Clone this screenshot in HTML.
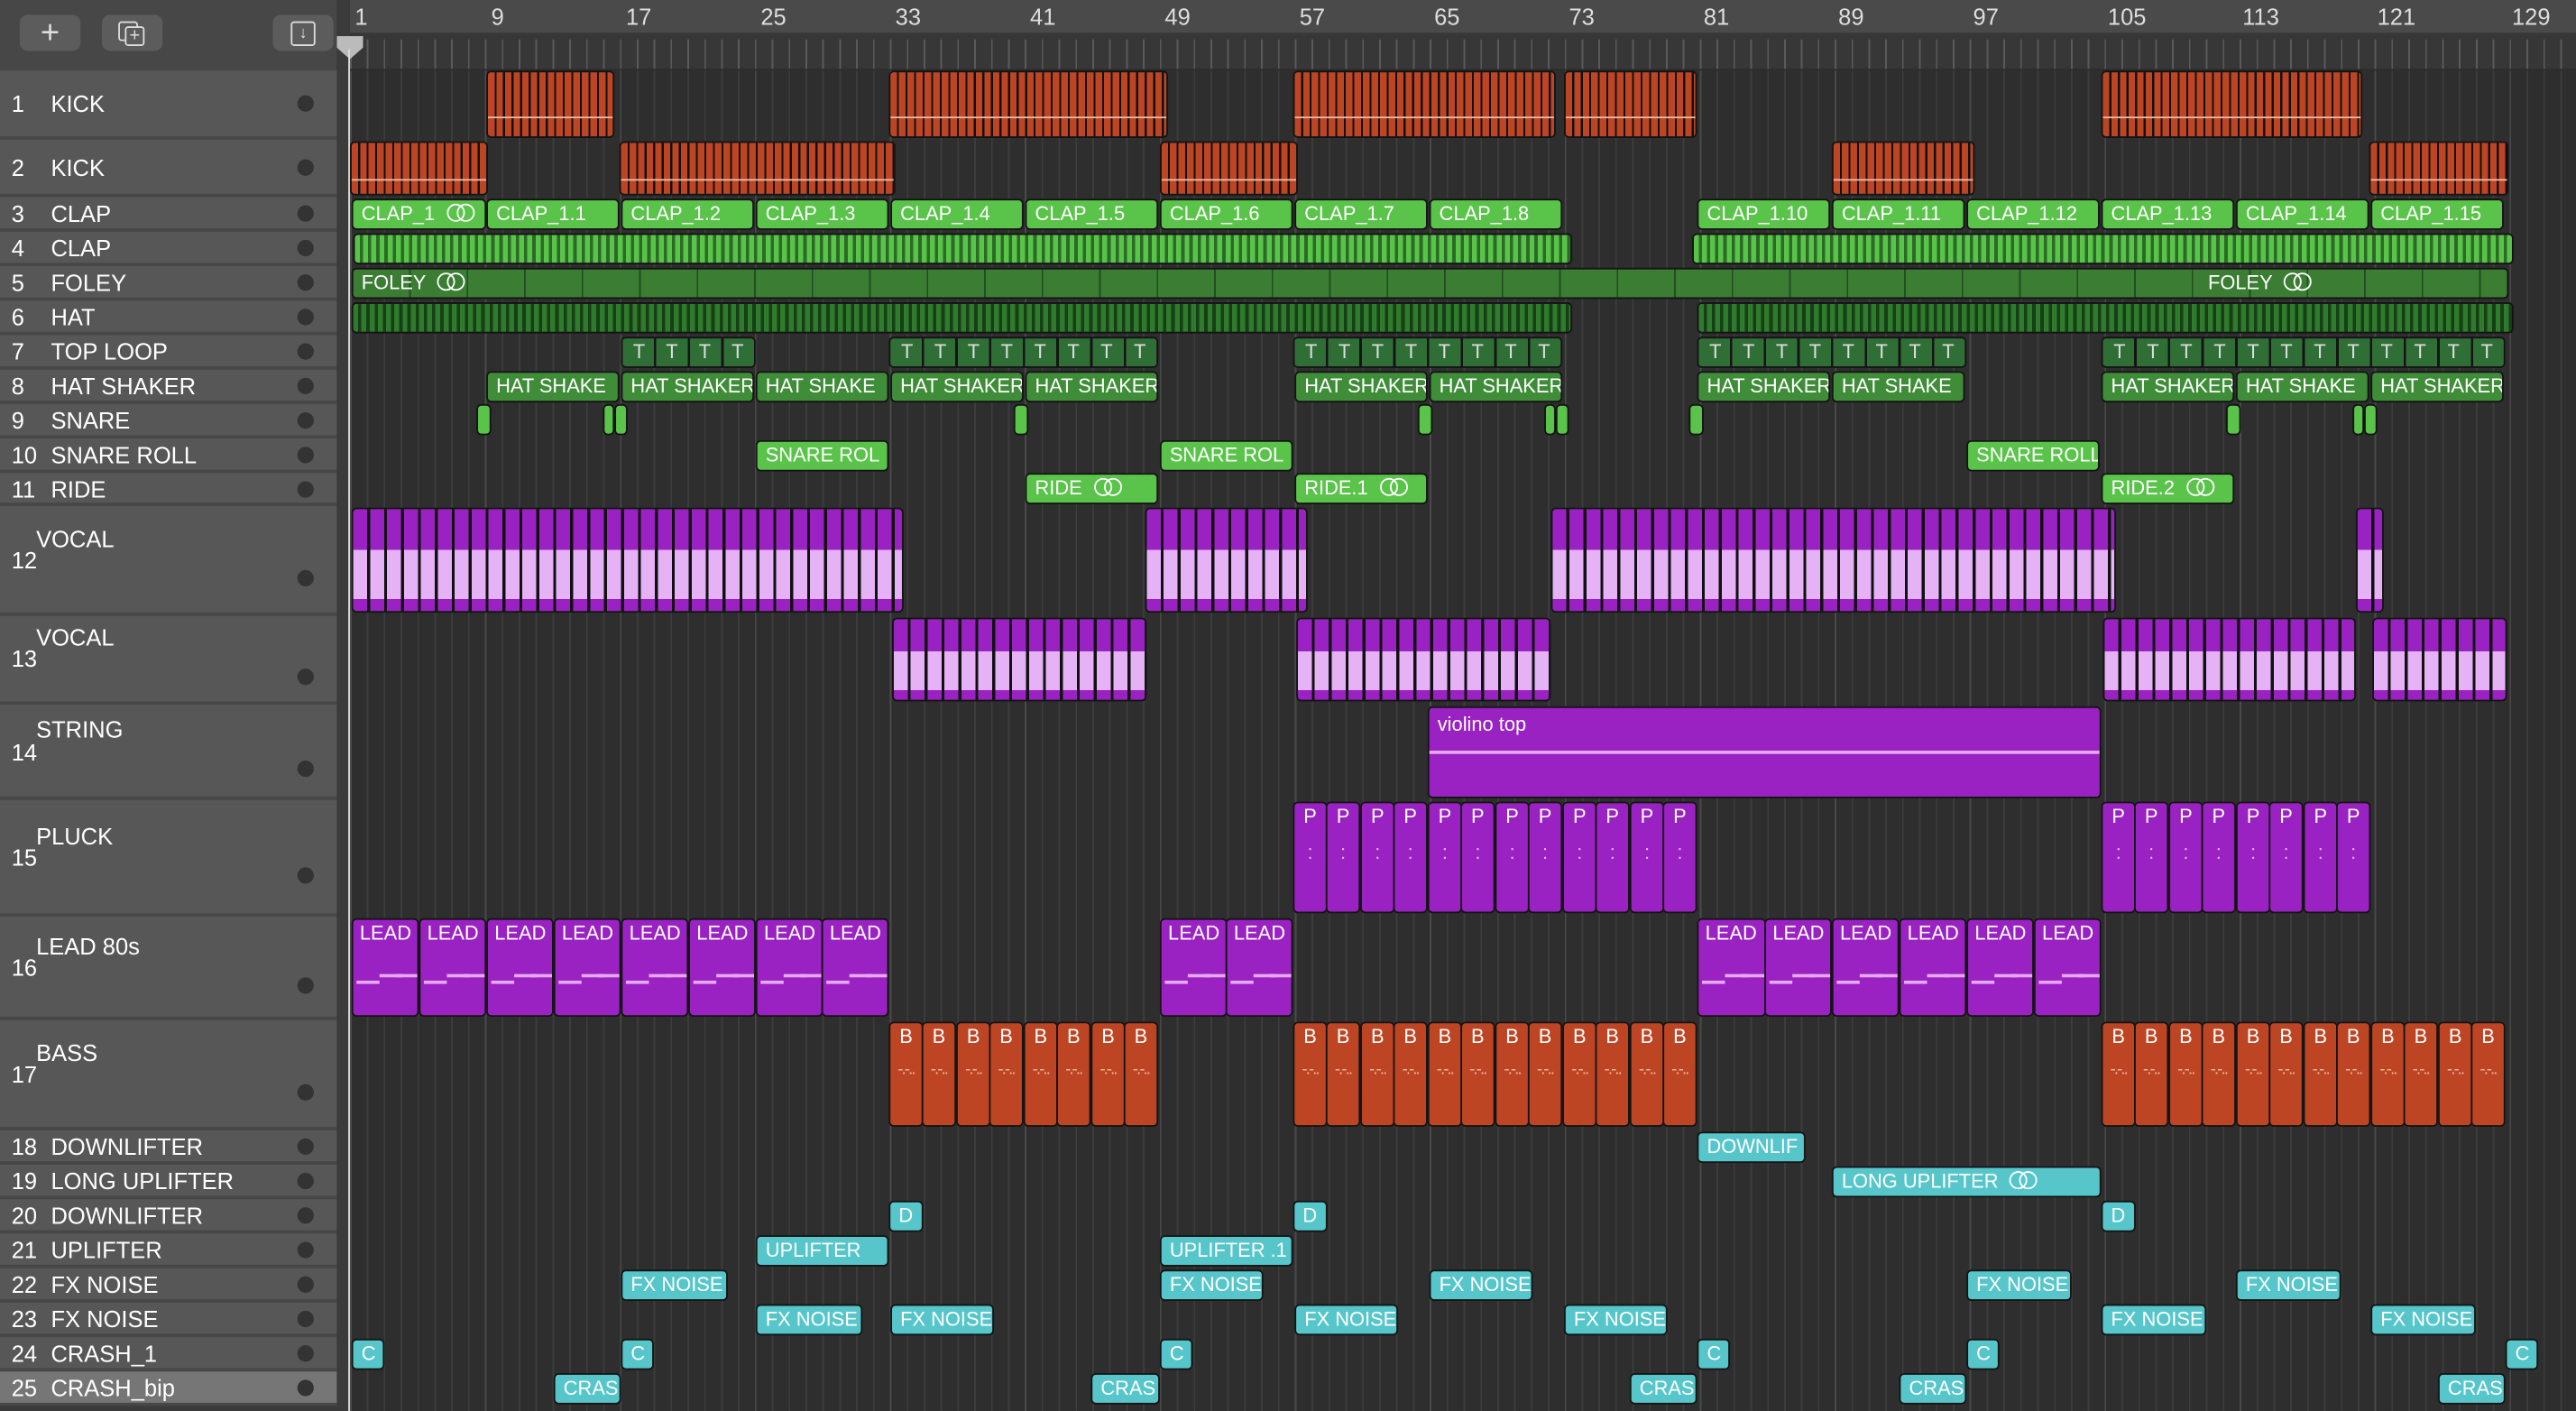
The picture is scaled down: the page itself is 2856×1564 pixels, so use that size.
<!DOCTYPE html>
<html><head><meta charset="utf-8">
<style>
html,body{margin:0;padding:0;background:#2d2d2d;overflow:hidden;width:2856px;height:1564px}
#w{position:absolute;left:0;top:0;width:1568px;height:859px;transform:scale(1.82143,1.8207);transform-origin:0 0;font-family:"Liberation Sans",sans-serif;background:#2e2e2e;overflow:hidden}
.a{position:absolute}
.tl{position:absolute;left:0;width:205px;background:#575757;border-bottom:2px solid #474747;box-sizing:border-box;color:#fff;font-size:14px}
.tl .n{position:absolute;left:7px}
.tl .t{position:absolute;left:31px}
.tl .d{position:absolute;left:181px;width:10px;height:10px;border-radius:50%;background:#333}
.r{position:absolute;border-radius:3px;border:1px solid #141414;box-sizing:border-box;color:#fff;font-size:12px;padding-left:5px;overflow:hidden;white-space:nowrap;line-height:17px}
.o{background:#bd4524}
.g{background:#5ac34a}
.dg{background:#3f8d38}
.p{background:#9a22c2}
.c{background:#56c6cb}
.ring{display:inline-block;width:9px;height:9px;border:1.3px solid #fff;border-radius:50%;vertical-align:-1px;margin-left:7px}
.ring+.ring{margin-left:-5px}
.kk{background:repeating-linear-gradient(90deg,#bd4524 0 4px,#111 4px 5.2px)}
.kk::after{content:"";position:absolute;left:0;right:0;top:70%;height:1px;background:#f1b9a5}
.st{background:repeating-linear-gradient(90deg,#5ac34a 0 3px,#2b6b26 3px 5px)}
.hs{background:repeating-linear-gradient(90deg,#2f7a2c 0 3px,#163f16 3px 5px)}
.vc{background:linear-gradient(#9a22c2 0 40%,transparent 40% 88%,#9a22c2 88%),repeating-linear-gradient(90deg,#e4b2f5 0 8.5px,#111 8.5px 10.3px)}
.vc::before{content:"";position:absolute;inset:0;background:repeating-linear-gradient(90deg,transparent 0 8.5px,#111 8.5px 10.3px)}
.pp{text-align:center;padding:0;background:#9a22c2}
.pp::after{content:":";position:absolute;left:0;right:0;top:22px;color:#e6a9f5;font-size:12px}
.ld::after{content:"";position:absolute;left:2px;width:14px;top:37px;height:2px;background:#e6a9f5;box-shadow:14px -4px 0 #e6a9f5,24px -4px 0 #e6a9f5}
.bb{text-align:center;padding:0;background:#bd4524}
.bb::after{content:"-.-..";position:absolute;left:0;right:0;top:20px;color:#f4b9a3;font-size:10px;letter-spacing:-1px}
</style></head><body><div id="w">
<div class="a" style="left:213px;top:0;width:1355px;height:859px;background:repeating-linear-gradient(90deg,#3c3c3c 0 1px,transparent 1px 10.27px)"></div>
<div class="a" style="left:213px;top:0;width:1355px;height:859px;background:repeating-linear-gradient(90deg,#4a4a4a 0 1px,transparent 1px 82.16px)"></div>
<div class="a" style="left:0;top:0;width:205px;height:43px;background:#474747;border-bottom:1px solid #3a3a3a"></div>
<div class="a" style="left:12px;top:9px;width:37px;height:22px;background:#5c5c5c;border-radius:5px;color:#ddd;text-align:center;font-size:20px;line-height:22px">+</div>
<div class="a" style="left:62px;top:9px;width:37px;height:22px;background:#5c5c5c;border-radius:5px"><div class="a" style="left:10px;top:4px;width:10px;height:10px;border:1.3px solid #ddd;border-radius:2px"></div><div class="a" style="left:14px;top:7px;width:10px;height:10px;border:1.3px solid #ddd;border-radius:2px;background:#5c5c5c;color:#ddd;font-size:11px;line-height:10px;text-align:center">+</div></div>
<div class="a" style="left:166px;top:9px;width:37px;height:22px;background:#5c5c5c;border-radius:5px"><div class="a" style="left:11px;top:4px;width:13px;height:13px;border:1.3px solid #ddd;border-radius:2px;color:#ddd;font-size:10px;line-height:14px;text-align:center">↓</div></div>
<div class="a" style="left:205px;top:0;width:8px;height:859px;background:#3b3b3b"></div>
<div class="a" style="left:213px;top:0;width:1355px;height:20px;background:#4a4a4a;border-bottom:1px solid #3c3c3c;color:#ddd;font-size:14px;line-height:20px">
<span class="a" style="left:3px">1</span><span class="a" style="left:86px">9</span><span class="a" style="left:168px">17</span><span class="a" style="left:250px">25</span><span class="a" style="left:332px">33</span><span class="a" style="left:414px">41</span><span class="a" style="left:496px">49</span><span class="a" style="left:578px">57</span><span class="a" style="left:660px">65</span><span class="a" style="left:742px">73</span><span class="a" style="left:824px">81</span><span class="a" style="left:906px">89</span><span class="a" style="left:988px">97</span><span class="a" style="left:1070px">105</span><span class="a" style="left:1152px">113</span><span class="a" style="left:1234px">121</span><span class="a" style="left:1316px">129</span></div>
<div class="a" style="left:213px;top:20px;width:1355px;height:22px;background:#373737;border-bottom:1px solid #2a2a2a"></div>
<div class="a" style="left:213px;top:24px;width:1355px;height:18px;background:repeating-linear-gradient(90deg,#5a5a5a 0 1px,transparent 1px 10.27px)"></div>
<div class="a" style="left:205px;top:22px;width:16px;height:14px;background:#bbb;clip-path:polygon(0 0,100% 0,100% 50%,50% 100%,0 50%)"></div>
<div class="a" style="left:212px;top:30px;width:1px;height:829px;background:#ddd"></div>
<div class="tl" style="top:43px;height:42px"><span class="n" style="top:12px">1</span><span class="t" style="top:12px">KICK</span><span class="d" style="top:15px"></span></div>
<div class="tl" style="top:85px;height:35px"><span class="n" style="top:9px">2</span><span class="t" style="top:9px">KICK</span><span class="d" style="top:12px"></span></div>
<div class="tl" style="top:120px;height:21px"><span class="n" style="top:2px">3</span><span class="t" style="top:2px">CLAP</span><span class="d" style="top:5px"></span></div>
<div class="tl" style="top:141px;height:21px"><span class="n" style="top:2px">4</span><span class="t" style="top:2px">CLAP</span><span class="d" style="top:5px"></span></div>
<div class="tl" style="top:162px;height:21px"><span class="n" style="top:2px">5</span><span class="t" style="top:2px">FOLEY</span><span class="d" style="top:5px"></span></div>
<div class="tl" style="top:183px;height:21px"><span class="n" style="top:2px">6</span><span class="t" style="top:2px">HAT</span><span class="d" style="top:5px"></span></div>
<div class="tl" style="top:204px;height:21px"><span class="n" style="top:2px">7</span><span class="t" style="top:2px">TOP LOOP</span><span class="d" style="top:5px"></span></div>
<div class="tl" style="top:225px;height:21px"><span class="n" style="top:2px">8</span><span class="t" style="top:2px">HAT SHAKER</span><span class="d" style="top:5px"></span></div>
<div class="tl" style="top:246px;height:21px"><span class="n" style="top:2px">9</span><span class="t" style="top:2px">SNARE</span><span class="d" style="top:5px"></span></div>
<div class="tl" style="top:267px;height:21px"><span class="n" style="top:2px">10</span><span class="t" style="top:2px">SNARE ROLL</span><span class="d" style="top:5px"></span></div>
<div class="tl" style="top:288px;height:20px"><span class="n" style="top:2px">11</span><span class="t" style="top:2px">RIDE</span><span class="d" style="top:5px"></span></div>
<div class="tl" style="top:308px;height:67px"><span class="n" style="top:25px">12</span><span class="t" style="left:22px;top:12px">VOCAL</span><span class="d" style="top:39px"></span></div>
<div class="tl" style="top:375px;height:54px"><span class="n" style="top:18px">13</span><span class="t" style="left:22px;top:5px">VOCAL</span><span class="d" style="top:32px"></span></div>
<div class="tl" style="top:429px;height:58px"><span class="n" style="top:21px">14</span><span class="t" style="left:22px;top:7px">STRING</span><span class="d" style="top:34px"></span></div>
<div class="tl" style="top:487px;height:71px"><span class="n" style="top:27px">15</span><span class="t" style="left:22px;top:14px">PLUCK</span><span class="d" style="top:41px"></span></div>
<div class="tl" style="top:558px;height:63px"><span class="n" style="top:23px">16</span><span class="t" style="left:22px;top:10px">LEAD 80s</span><span class="d" style="top:37px"></span></div>
<div class="tl" style="top:621px;height:67px"><span class="n" style="top:25px">17</span><span class="t" style="left:22px;top:12px">BASS</span><span class="d" style="top:39px"></span></div>
<div class="tl" style="top:688px;height:21px"><span class="n" style="top:2px">18</span><span class="t" style="top:2px">DOWNLIFTER</span><span class="d" style="top:5px"></span></div>
<div class="tl" style="top:709px;height:21px"><span class="n" style="top:2px">19</span><span class="t" style="top:2px">LONG UPLIFTER</span><span class="d" style="top:5px"></span></div>
<div class="tl" style="top:730px;height:21px"><span class="n" style="top:2px">20</span><span class="t" style="top:2px">DOWNLIFTER</span><span class="d" style="top:5px"></span></div>
<div class="tl" style="top:751px;height:21px"><span class="n" style="top:2px">21</span><span class="t" style="top:2px">UPLIFTER</span><span class="d" style="top:5px"></span></div>
<div class="tl" style="top:772px;height:21px"><span class="n" style="top:2px">22</span><span class="t" style="top:2px">FX NOISE</span><span class="d" style="top:5px"></span></div>
<div class="tl" style="top:793px;height:21px"><span class="n" style="top:2px">23</span><span class="t" style="top:2px">FX NOISE</span><span class="d" style="top:5px"></span></div>
<div class="tl" style="top:814px;height:21px"><span class="n" style="top:2px">24</span><span class="t" style="top:2px">CRASH_1</span><span class="d" style="top:5px"></span></div>
<div class="tl" style="top:835px;height:21px;background:#767676"><span class="n" style="top:2px">25</span><span class="t" style="top:2px">CRASH_bip</span><span class="d" style="top:5px"></span></div>
<div class="a" style="left:0;top:856px;width:205px;height:3px;background:#3b3b3b"></div>

<div class="r kk" style="left:296px;top:43px;width:78px;height:41px"></div>
<div class="r kk" style="left:541px;top:43px;width:170px;height:41px"></div>
<div class="r kk" style="left:787px;top:43px;width:160px;height:41px"></div>
<div class="r kk" style="left:952px;top:43px;width:81px;height:41px"></div>
<div class="r kk" style="left:1279px;top:43px;width:159px;height:41px"></div>
<div class="r kk" style="left:213px;top:86px;width:84px;height:33px"></div>
<div class="r kk" style="left:377px;top:86px;width:168px;height:33px"></div>
<div class="r kk" style="left:706px;top:86px;width:84px;height:33px"></div>
<div class="r kk" style="left:1115px;top:86px;width:87px;height:33px"></div>
<div class="r kk" style="left:1442px;top:86px;width:85px;height:33px"></div>
<div class="r g" style="left:214px;top:121px;width:82px;height:19px">CLAP_1<span class="ring"></span><span class="ring"></span></div>
<div class="r g" style="left:296px;top:121px;width:81px;height:19px">CLAP_1.1</div>
<div class="r g" style="left:378px;top:121px;width:81px;height:19px">CLAP_1.2</div>
<div class="r g" style="left:460px;top:121px;width:81px;height:19px">CLAP_1.3</div>
<div class="r g" style="left:542px;top:121px;width:81px;height:19px">CLAP_1.4</div>
<div class="r g" style="left:624px;top:121px;width:81px;height:19px">CLAP_1.5</div>
<div class="r g" style="left:706px;top:121px;width:81px;height:19px">CLAP_1.6</div>
<div class="r g" style="left:788px;top:121px;width:81px;height:19px">CLAP_1.7</div>
<div class="r g" style="left:870px;top:121px;width:81px;height:19px">CLAP_1.8</div>
<div class="r g" style="left:1033px;top:121px;width:81px;height:19px">CLAP_1.10</div>
<div class="r g" style="left:1115px;top:121px;width:81px;height:19px">CLAP_1.11</div>
<div class="r g" style="left:1197px;top:121px;width:81px;height:19px">CLAP_1.12</div>
<div class="r g" style="left:1279px;top:121px;width:81px;height:19px">CLAP_1.13</div>
<div class="r g" style="left:1361px;top:121px;width:81px;height:19px">CLAP_1.14</div>
<div class="r g" style="left:1443px;top:121px;width:81px;height:19px">CLAP_1.15</div>
<div class="r st" style="left:215px;top:142px;width:742px;height:19px"></div>
<div class="r st" style="left:1030px;top:142px;width:500px;height:19px"></div>
<div class="r" style="left:214px;top:163px;width:1313px;height:19px;background:repeating-linear-gradient(90deg,#3a7d33 0 34px,#214f20 34px 35px)">FOLEY<span class="ring"></span><span class="ring"></span><span class="a" style="left:1129px;top:0">FOLEY<span class="ring"></span><span class="ring"></span></span></div>
<div class="r hs" style="left:214px;top:184px;width:743px;height:19px"></div>
<div class="r hs" style="left:1033px;top:184px;width:497px;height:19px"></div>
<div class="a" style="left:378px;top:205px;width:82px;height:19px;background:repeating-linear-gradient(90deg,#2f6f36 0 19px,#141414 19px 20.5px);border-radius:3px;border:1px solid #141414;box-sizing:border-box;color:#ddd;font-size:12px;display:flex;justify-content:space-around;line-height:17px"><span>T</span><span>T</span><span>T</span><span>T</span></div>
<div class="a" style="left:541px;top:205px;width:164px;height:19px;background:repeating-linear-gradient(90deg,#2f6f36 0 19px,#141414 19px 20.5px);border-radius:3px;border:1px solid #141414;box-sizing:border-box;color:#ddd;font-size:12px;display:flex;justify-content:space-around;line-height:17px"><span>T</span><span>T</span><span>T</span><span>T</span><span>T</span><span>T</span><span>T</span><span>T</span></div>
<div class="a" style="left:787px;top:205px;width:164px;height:19px;background:repeating-linear-gradient(90deg,#2f6f36 0 19px,#141414 19px 20.5px);border-radius:3px;border:1px solid #141414;box-sizing:border-box;color:#ddd;font-size:12px;display:flex;justify-content:space-around;line-height:17px"><span>T</span><span>T</span><span>T</span><span>T</span><span>T</span><span>T</span><span>T</span><span>T</span></div>
<div class="a" style="left:1033px;top:205px;width:164px;height:19px;background:repeating-linear-gradient(90deg,#2f6f36 0 19px,#141414 19px 20.5px);border-radius:3px;border:1px solid #141414;box-sizing:border-box;color:#ddd;font-size:12px;display:flex;justify-content:space-around;line-height:17px"><span>T</span><span>T</span><span>T</span><span>T</span><span>T</span><span>T</span><span>T</span><span>T</span></div>
<div class="a" style="left:1279px;top:205px;width:246px;height:19px;background:repeating-linear-gradient(90deg,#2f6f36 0 19px,#141414 19px 20.5px);border-radius:3px;border:1px solid #141414;box-sizing:border-box;color:#ddd;font-size:12px;display:flex;justify-content:space-around;line-height:17px"><span>T</span><span>T</span><span>T</span><span>T</span><span>T</span><span>T</span><span>T</span><span>T</span><span>T</span><span>T</span><span>T</span><span>T</span></div>
<div class="r dg" style="left:296px;top:226px;width:81px;height:19px">HAT SHAKE</div>
<div class="r dg" style="left:378px;top:226px;width:81px;height:19px">HAT SHAKER</div>
<div class="r dg" style="left:460px;top:226px;width:81px;height:19px">HAT SHAKE</div>
<div class="r dg" style="left:542px;top:226px;width:81px;height:19px">HAT SHAKER</div>
<div class="r dg" style="left:624px;top:226px;width:81px;height:19px">HAT SHAKER</div>
<div class="r dg" style="left:788px;top:226px;width:81px;height:19px">HAT SHAKER</div>
<div class="r dg" style="left:870px;top:226px;width:81px;height:19px">HAT SHAKER</div>
<div class="r dg" style="left:1033px;top:226px;width:81px;height:19px">HAT SHAKER</div>
<div class="r dg" style="left:1115px;top:226px;width:81px;height:19px">HAT SHAKE</div>
<div class="r dg" style="left:1279px;top:226px;width:81px;height:19px">HAT SHAKER</div>
<div class="r dg" style="left:1361px;top:226px;width:81px;height:19px">HAT SHAKE</div>
<div class="r dg" style="left:1443px;top:226px;width:81px;height:19px">HAT SHAKER</div>
<div class="r g" style="left:290px;top:246px;width:9px;height:19px;padding:0"></div>
<div class="r g" style="left:367px;top:246px;width:7px;height:19px;padding:0"></div>
<div class="r g" style="left:374px;top:246px;width:8px;height:19px;padding:0"></div>
<div class="r g" style="left:617px;top:246px;width:9px;height:19px;padding:0"></div>
<div class="r g" style="left:863px;top:246px;width:9px;height:19px;padding:0"></div>
<div class="r g" style="left:940px;top:246px;width:7px;height:19px;padding:0"></div>
<div class="r g" style="left:947px;top:246px;width:8px;height:19px;padding:0"></div>
<div class="r g" style="left:1028px;top:246px;width:9px;height:19px;padding:0"></div>
<div class="r g" style="left:1355px;top:246px;width:9px;height:19px;padding:0"></div>
<div class="r g" style="left:1432px;top:246px;width:7px;height:19px;padding:0"></div>
<div class="r g" style="left:1439px;top:246px;width:8px;height:19px;padding:0"></div>
<div class="r g" style="left:460px;top:268px;width:81px;height:19px">SNARE ROL</div>
<div class="r g" style="left:706px;top:268px;width:81px;height:19px">SNARE ROL</div>
<div class="r g" style="left:1197px;top:268px;width:81px;height:19px">SNARE ROLL</div>
<div class="r g" style="left:624px;top:288px;width:81px;height:19px">RIDE<span class="ring"></span><span class="ring"></span></div>
<div class="r g" style="left:788px;top:288px;width:81px;height:19px">RIDE.1<span class="ring"></span><span class="ring"></span></div>
<div class="r g" style="left:1279px;top:288px;width:81px;height:19px">RIDE.2<span class="ring"></span><span class="ring"></span></div>
<div class="r vc" style="left:214px;top:309px;width:336px;height:64px"></div>
<div class="r vc" style="left:697px;top:309px;width:99px;height:64px"></div>
<div class="r vc" style="left:944px;top:309px;width:344px;height:64px"></div>
<div class="r vc" style="left:1434px;top:309px;width:17px;height:64px"></div>
<div class="r vc" style="left:543px;top:376px;width:155px;height:51px"></div>
<div class="r vc" style="left:789px;top:376px;width:155px;height:51px"></div>
<div class="r vc" style="left:1280px;top:376px;width:154px;height:51px"></div>
<div class="r vc" style="left:1444px;top:376px;width:82px;height:51px"></div>
<div class="r p" style="left:869px;top:430px;width:410px;height:56px;line-height:20px">violino top<div class="a" style="left:0;right:0;top:26px;height:2px;background:#e6a9f5"></div></div>
<div class="r pp" style="left:787px;top:488px;width:21px;height:68px">P</div>
<div class="r pp" style="left:807px;top:488px;width:21px;height:68px">P</div>
<div class="r pp" style="left:828px;top:488px;width:21px;height:68px">P</div>
<div class="r pp" style="left:848px;top:488px;width:21px;height:68px">P</div>
<div class="r pp" style="left:869px;top:488px;width:21px;height:68px">P</div>
<div class="r pp" style="left:889px;top:488px;width:21px;height:68px">P</div>
<div class="r pp" style="left:910px;top:488px;width:21px;height:68px">P</div>
<div class="r pp" style="left:930px;top:488px;width:21px;height:68px">P</div>
<div class="r pp" style="left:951px;top:488px;width:21px;height:68px">P</div>
<div class="r pp" style="left:971px;top:488px;width:21px;height:68px">P</div>
<div class="r pp" style="left:992px;top:488px;width:21px;height:68px">P</div>
<div class="r pp" style="left:1012px;top:488px;width:21px;height:68px">P</div>
<div class="r pp" style="left:1279px;top:488px;width:21px;height:68px">P</div>
<div class="r pp" style="left:1299px;top:488px;width:21px;height:68px">P</div>
<div class="r pp" style="left:1320px;top:488px;width:21px;height:68px">P</div>
<div class="r pp" style="left:1340px;top:488px;width:21px;height:68px">P</div>
<div class="r pp" style="left:1361px;top:488px;width:21px;height:68px">P</div>
<div class="r pp" style="left:1381px;top:488px;width:21px;height:68px">P</div>
<div class="r pp" style="left:1402px;top:488px;width:21px;height:68px">P</div>
<div class="r pp" style="left:1422px;top:488px;width:21px;height:68px">P</div>
<div class="r p ld" style="left:214px;top:559px;width:41px;height:60px;padding-left:4px">LEAD</div>
<div class="r p ld" style="left:255px;top:559px;width:41px;height:60px;padding-left:4px">LEAD</div>
<div class="r p ld" style="left:296px;top:559px;width:41px;height:60px;padding-left:4px">LEAD</div>
<div class="r p ld" style="left:337px;top:559px;width:41px;height:60px;padding-left:4px">LEAD</div>
<div class="r p ld" style="left:378px;top:559px;width:41px;height:60px;padding-left:4px">LEAD</div>
<div class="r p ld" style="left:419px;top:559px;width:41px;height:60px;padding-left:4px">LEAD</div>
<div class="r p ld" style="left:460px;top:559px;width:41px;height:60px;padding-left:4px">LEAD</div>
<div class="r p ld" style="left:500px;top:559px;width:41px;height:60px;padding-left:4px">LEAD</div>
<div class="r p ld" style="left:706px;top:559px;width:41px;height:60px;padding-left:4px">LEAD</div>
<div class="r p ld" style="left:746px;top:559px;width:41px;height:60px;padding-left:4px">LEAD</div>
<div class="r p ld" style="left:1033px;top:559px;width:42px;height:60px;padding-left:4px">LEAD</div>
<div class="r p ld" style="left:1074px;top:559px;width:41px;height:60px;padding-left:4px">LEAD</div>
<div class="r p ld" style="left:1115px;top:559px;width:41px;height:60px;padding-left:4px">LEAD</div>
<div class="r p ld" style="left:1156px;top:559px;width:41px;height:60px;padding-left:4px">LEAD</div>
<div class="r p ld" style="left:1197px;top:559px;width:41px;height:60px;padding-left:4px">LEAD</div>
<div class="r p ld" style="left:1238px;top:559px;width:41px;height:60px;padding-left:4px">LEAD</div>
<div class="r bb" style="left:541px;top:622px;width:21px;height:64px">B</div>
<div class="r bb" style="left:561px;top:622px;width:21px;height:64px">B</div>
<div class="r bb" style="left:582px;top:622px;width:21px;height:64px">B</div>
<div class="r bb" style="left:602px;top:622px;width:21px;height:64px">B</div>
<div class="r bb" style="left:623px;top:622px;width:21px;height:64px">B</div>
<div class="r bb" style="left:643px;top:622px;width:21px;height:64px">B</div>
<div class="r bb" style="left:664px;top:622px;width:21px;height:64px">B</div>
<div class="r bb" style="left:684px;top:622px;width:21px;height:64px">B</div>
<div class="r bb" style="left:787px;top:622px;width:21px;height:64px">B</div>
<div class="r bb" style="left:807px;top:622px;width:21px;height:64px">B</div>
<div class="r bb" style="left:828px;top:622px;width:21px;height:64px">B</div>
<div class="r bb" style="left:848px;top:622px;width:21px;height:64px">B</div>
<div class="r bb" style="left:869px;top:622px;width:21px;height:64px">B</div>
<div class="r bb" style="left:889px;top:622px;width:21px;height:64px">B</div>
<div class="r bb" style="left:910px;top:622px;width:21px;height:64px">B</div>
<div class="r bb" style="left:930px;top:622px;width:21px;height:64px">B</div>
<div class="r bb" style="left:951px;top:622px;width:21px;height:64px">B</div>
<div class="r bb" style="left:971px;top:622px;width:21px;height:64px">B</div>
<div class="r bb" style="left:992px;top:622px;width:21px;height:64px">B</div>
<div class="r bb" style="left:1012px;top:622px;width:21px;height:64px">B</div>
<div class="r bb" style="left:1279px;top:622px;width:21px;height:64px">B</div>
<div class="r bb" style="left:1299px;top:622px;width:21px;height:64px">B</div>
<div class="r bb" style="left:1320px;top:622px;width:21px;height:64px">B</div>
<div class="r bb" style="left:1340px;top:622px;width:21px;height:64px">B</div>
<div class="r bb" style="left:1361px;top:622px;width:21px;height:64px">B</div>
<div class="r bb" style="left:1381px;top:622px;width:21px;height:64px">B</div>
<div class="r bb" style="left:1402px;top:622px;width:21px;height:64px">B</div>
<div class="r bb" style="left:1422px;top:622px;width:21px;height:64px">B</div>
<div class="r bb" style="left:1443px;top:622px;width:21px;height:64px">B</div>
<div class="r bb" style="left:1463px;top:622px;width:21px;height:64px">B</div>
<div class="r bb" style="left:1484px;top:622px;width:21px;height:64px">B</div>
<div class="r bb" style="left:1504px;top:622px;width:21px;height:64px">B</div>
<div class="r c" style="left:1033px;top:689px;width:66px;height:19px">DOWNLIF</div>
<div class="r c" style="left:1115px;top:710px;width:164px;height:19px">LONG UPLIFTER<span class="ring"></span><span class="ring"></span></div>
<div class="r c" style="left:541px;top:731px;width:21px;height:19px">D</div>
<div class="r c" style="left:787px;top:731px;width:21px;height:19px">D</div>
<div class="r c" style="left:1279px;top:731px;width:21px;height:19px">D</div>
<div class="r c" style="left:460px;top:752px;width:81px;height:19px">UPLIFTER</div>
<div class="r c" style="left:706px;top:752px;width:81px;height:19px">UPLIFTER .1</div>
<div class="r c" style="left:378px;top:773px;width:65px;height:19px">FX NOISE</div>
<div class="r c" style="left:706px;top:773px;width:63px;height:19px">FX NOISE</div>
<div class="r c" style="left:870px;top:773px;width:63px;height:19px">FX NOISE</div>
<div class="r c" style="left:1197px;top:773px;width:64px;height:19px">FX NOISE</div>
<div class="r c" style="left:1361px;top:773px;width:64px;height:19px">FX NOISE</div>
<div class="r c" style="left:460px;top:794px;width:65px;height:19px">FX NOISE</div>
<div class="r c" style="left:542px;top:794px;width:63px;height:19px">FX NOISE</div>
<div class="r c" style="left:788px;top:794px;width:63px;height:19px">FX NOISE</div>
<div class="r c" style="left:952px;top:794px;width:63px;height:19px">FX NOISE</div>
<div class="r c" style="left:1279px;top:794px;width:64px;height:19px">FX NOISE</div>
<div class="r c" style="left:1443px;top:794px;width:64px;height:19px">FX NOISE</div>
<div class="r c" style="left:214px;top:815px;width:20px;height:19px">C</div>
<div class="r c" style="left:378px;top:815px;width:20px;height:19px">C</div>
<div class="r c" style="left:706px;top:815px;width:20px;height:19px">C</div>
<div class="r c" style="left:1033px;top:815px;width:20px;height:19px">C</div>
<div class="r c" style="left:1197px;top:815px;width:20px;height:19px">C</div>
<div class="r c" style="left:1525px;top:815px;width:20px;height:19px">C</div>
<div class="r c" style="left:337px;top:836px;width:41px;height:19px">CRAS</div>
<div class="r c" style="left:664px;top:836px;width:42px;height:19px">CRAS</div>
<div class="r c" style="left:992px;top:836px;width:41px;height:19px">CRAS</div>
<div class="r c" style="left:1156px;top:836px;width:41px;height:19px">CRAS</div>
<div class="r c" style="left:1484px;top:836px;width:41px;height:19px">CRAS</div>
</div></body></html>
